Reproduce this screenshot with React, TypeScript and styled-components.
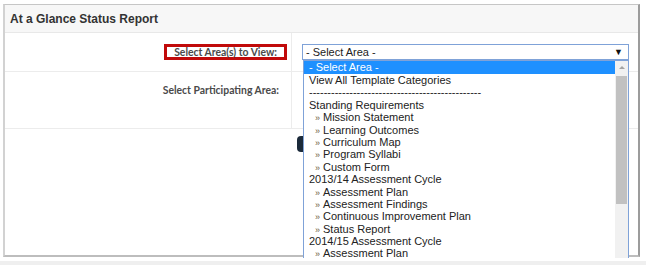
import styled, { createGlobalStyle } from "styled-components";

const GlobalStyle = createGlobalStyle`
  html, body {
    margin: 0;
    padding: 0;
    background: #ffffff;
  }
`;

type Option = { label: string; sub?: boolean; selected?: boolean };

const options: Option[] = [
  { label: "- Select Area -", selected: true },
  { label: "View All Template Categories" },
  { label: "-----------------------------------------------" },
  { label: "Standing Requirements" },
  { label: "Mission Statement", sub: true },
  { label: "Learning Outcomes", sub: true },
  { label: "Curriculum Map", sub: true },
  { label: "Program Syllabi", sub: true },
  { label: "Custom Form", sub: true },
  { label: "2013/14 Assessment Cycle" },
  { label: "Assessment Plan", sub: true },
  { label: "Assessment Findings", sub: true },
  { label: "Continuous Improvement Plan", sub: true },
  { label: "Status Report", sub: true },
  { label: "2014/15 Assessment Cycle" },
  { label: "Assessment Plan", sub: true },
];

const Page = styled.div`
  width: 646px;
  height: 265px;
  overflow: hidden;
  display: flex;
  flex-direction: column;
`;

const Panel = styled.div`
  position: relative;
  margin: 4px 6px 0 3px;
  height: 250px;
  border-top: 1px solid #c6c6c6;
  border-left: 2px solid #d2d2d2;
  border-right: 2px solid #9c9c9c;
  border-bottom: 2px solid #bdbdbd;
  background: #ffffff;
`;

const Strip = styled.div`
  flex: 1;
  margin-top: 4px;
  background: #efefef;
`;

const Header = styled.div`
  height: 27px;
  display: flex;
  align-items: center;
  padding-left: 5px;
  background: #f7f7f7;
  border-bottom: 1px solid #e8e8e8;
  font-family: "Liberation Sans", Arial, sans-serif;
  font-weight: bold;
  font-size: 12px;
  color: #333333;
`;

const FormGrid = styled.div`
  display: grid;
  grid-template-columns: 287px 1fr;
  grid-template-rows: 39px 57px;
`;

const LabelCell = styled.div<{ $top?: boolean }>`
  display: flex;
  justify-content: flex-end;
  align-items: ${(p) => (p.$top ? "flex-start" : "center")};
  padding-top: ${(p) => (p.$top ? "12px" : "0")};
  padding-right: ${(p) => (p.$top ? "12px" : "4px")};
  border-right: 1px solid #ececec;
  border-bottom: 1px solid #ececec;
  font-family: Lato, "Open Sans", sans-serif;
  font-weight: bold;
  font-size: 10.4px;
  color: #4a4a4a;
`;

const Highlighted = styled.span`
  display: inline-flex;
  align-items: center;
  height: 10px;
  padding: 0 7px 0 7px;
  margin-top: 0;
  border: 3px solid #c10a0a;
`;

const FieldCell = styled.div`
  border-bottom: 1px solid #ececec;
  padding: 11px 9px 0 10px;
`;

const SelectBox = styled.div`
  height: 14px;
  display: flex;
  align-items: center;
  justify-content: space-between;
  padding: 0 5px 0 3px;
  border: 1px solid #7fa2d8;
  background: #ffffff;
  font-family: "Liberation Sans", Arial, sans-serif;
  font-size: 11px;
  color: #222222;
`;

const Arrow = styled.span`
  font-size: 9px;
  color: #111111;
`;

const Footer = styled.div`
  display: flex;
  padding: 7px 0 0 292px;
`;

const DarkButton = styled.div`
  width: 60px;
  height: 16px;
  border-radius: 4px;
  background: #1b2a3a;
`;

const ListBox = styled.div`
  position: absolute;
  left: 298px;
  top: 55px;
  width: 324px;
  height: 197px;
  display: flex;
  border: 1px solid #7fa2d8;
  border-bottom: none;
  background: #ffffff;
  font-family: "Liberation Sans", Arial, sans-serif;
  font-size: 11px;
  color: #222222;
`;

const Items = styled.div`
  flex: 1;
  display: flex;
  flex-direction: column;
`;

const Item = styled.div<{ $selected?: boolean; $sub?: boolean }>`
  height: 12.4px;
  line-height: 12.4px;
  white-space: nowrap;
  padding-left: ${(p) => (p.$sub ? "11px" : "5px")};
  background: ${(p) => (p.$selected ? "#1e90ff" : "transparent")};
  color: ${(p) => (p.$selected ? "#ffffff" : "#222222")};
  &:first-child {
    height: 13px;
    line-height: 13px;
  }
`;

const Chevron = styled.span`
  color: #6e5a3a;
  font-size: 9px;
  margin-right: 3px;
`;

const Scrollbar = styled.div`
  width: 13px;
  display: flex;
  flex-direction: column;
  align-items: center;
  background: #f1f1f1;
`;

const ScrollUp = styled.div`
  margin-top: 5px;
  width: 0;
  height: 0;
  border-left: 3px solid transparent;
  border-right: 3px solid transparent;
  border-bottom: 3px solid #a3a3a3;
`;

const Thumb = styled.div`
  margin-top: 7px;
  width: 11px;
  height: 128px;
  background: #c1c1c1;
`;

export default function App() {
  return (
    <>
      <GlobalStyle />
      <Page>
        <Panel>
          <Header>At a Glance Status Report</Header>
          <FormGrid>
            <LabelCell>
              <Highlighted>Select Area(s) to View:</Highlighted>
            </LabelCell>
            <FieldCell>
              <SelectBox>
                <span>- Select Area -</span>
                <Arrow>▼</Arrow>
              </SelectBox>
            </FieldCell>
            <LabelCell $top>Select Participating Area:</LabelCell>
            <FieldCell />
          </FormGrid>
          <Footer>
            <DarkButton />
          </Footer>
          <ListBox>
            <Items>
              {options.map((o, i) => (
                <Item key={i} $selected={o.selected} $sub={o.sub}>
                  {o.sub && <Chevron>»</Chevron>}
                  {o.label}
                </Item>
              ))}
            </Items>
            <Scrollbar>
              <ScrollUp />
              <Thumb />
            </Scrollbar>
          </ListBox>
        </Panel>
        <Strip />
      </Page>
    </>
  );
}
